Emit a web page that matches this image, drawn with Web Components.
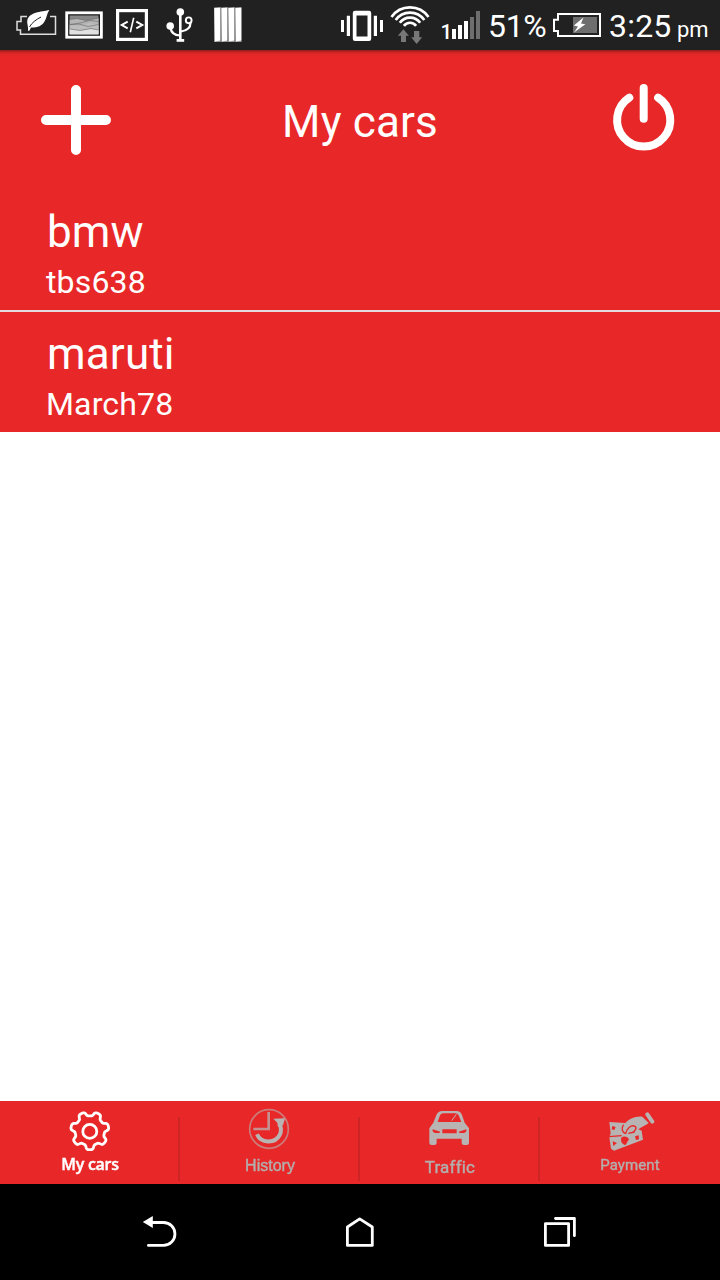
<!DOCTYPE html>
<html lang="en">
<head>
<meta charset="utf-8">
<title>My cars</title>
<style>
  body {
    margin: 0;
    background: #fff;
    font-family: Roboto, sans-serif;
    color: #fff;
  }
</style>
</head>
<body>
<phone-screen>
  <status-bar slot="status" battery="51%" time="3:25" period="pm"></status-bar>
  <app-header slot="header">My cars</app-header>
  <car-item name="bmw" plate="tbs638"></car-item>
  <car-item name="maruti" plate="March78"></car-item>
  <tab-bar slot="tabs"></tab-bar>
  <nav-bar slot="nav"></nav-bar>
</phone-screen>

<script>
// attach an open shadow root holding a copy of the given markup
function render(host, html) {
  const template = document.createElement('template');
  template.innerHTML = html;
  host.attachShadow({ mode: 'open' });
  host.shadowRoot.appendChild(template.content.cloneNode(true));
}

class PhoneScreen extends HTMLElement {
  constructor() {
    super();
    render(this, `
      <style>
        :host {
          display: flex;
          flex-direction: column;
          width: 720px;
          height: 1280px;
          overflow: hidden;
        }
        main {
          flex: 1;
        }
      </style>
      <slot name="status"></slot>
      <slot name="header"></slot>
      <main><slot></slot></main>
      <slot name="tabs"></slot>
      <slot name="nav"></slot>`);
  }
}

class StatusBar extends HTMLElement {
  constructor() {
    super();
    render(this, `
      <style>
        :host {
          display: flex;
          justify-content: space-between;
          height: 50px;
          background: #212121;
        }
        .group {
          display: flex;
        }
        .left {
          padding-left: 10px;
        }
        .right {
          padding-right: 12px;
        }
        svg {
          display: block;
          height: 50px;
          flex: none;
        }
        span {
          line-height: 52px;
          font-size: 32px;
          white-space: nowrap;
        }
        .battery {
          width: 64px;
          letter-spacing: -.3px;
        }
        .time {
          width: 68px;
          letter-spacing: .2px;
        }
        .period {
          width: 31px;
          font-size: 22px;
          line-height: 59px;
          height: 50px;
        }
      </style>
      <div class="group left">
        <svg width="50" viewBox="10 0 50 50" fill="none">
          <path d="M27 16.5H21V21.5H17V30H20.5V34.3H55.5V16.5H50" stroke="#ddd" stroke-width="1.5"/>
          <path d="M49.3 10C41 12 29 12 27.3 20.5C26.8 24 28.6 26 28 31L29.5 30.5L31 27.6C37 27.8 42 26 44.5 21.5C46.8 17.8 46.8 13.5 49.3 10Z" fill="#fff"/>
          <path d="M29.5 27C31.5 23 36 19.5 41 17" stroke="#212121" stroke-width="1"/>
        </svg>
        <svg width="49" viewBox="60 0 49 50" fill="none">
          <rect x="66.7" y="12.8" width="34.7" height="24.4" stroke="#fff" stroke-width="2.8"/>
          <rect x="69.7" y="15.5" width="28.8" height="18.8" fill="#888"/>
          <path d="M69.7 19.5L77 18.5L86 20.5L98.5 18V34.3H69.7Z" fill="#b5b5b5"/>
          <path d="M69.7 24.5L80 26L90 23L98.5 25V34.3H69.7Z" fill="#bdbdbd"/>
          <path d="M69.7 29L80 30.5L91 29L98.5 30V34.3H69.7Z" fill="#e2e2e2"/>
          <path d="M69.7 19.5L77 18.5L86 20.5L98.5 18M69.7 24.5L80 23L90 20.5L98.5 21.5M69.7 24.8L79 24L88 26.5L98.5 24.5M69.7 29L80 30.5L91 28.5L98.5 30" stroke="#666" stroke-width=".6"/>
        </svg>
        <svg width="48" viewBox="109 0 48 50" fill="none" stroke="#fff">
          <rect x="117.6" y="10.6" width="28.8" height="28.8" stroke-width="3.2"/>
          <path d="M127.7 21.7L121.8 25L127.7 28.3M136.3 21.7L142.2 25L136.3 28.3" stroke-width="2"/>
          <path d="M133.7 17.8L130.3 32.3" stroke-width="1.6"/>
        </svg>
        <svg width="47" viewBox="157 0 47 50" fill="none" stroke="#fff" stroke-width="2.2">
          <circle cx="180.3" cy="12" r="3.8" fill="#fff" stroke="none"/>
          <circle cx="170.2" cy="26" r="3.8" fill="#fff" stroke="none"/>
          <circle cx="188.7" cy="20.3" r="2.9" stroke-width="1.9"/>
          <path d="M180.3 12V40" stroke-width="2.6"/>
          <path d="M176.6 40.4H184.2" stroke-width="2.8"/>
          <path d="M170.5 28Q171.5 35 180 35.5M190.5 23Q190.5 30 181 31.5"/>
        </svg>
        <svg width="46" viewBox="204 0 46 50">
          <path d="M214 7.5H241.5V42H214Z" fill="#999"/>
          <path d="M214.3 8L220.4 7.4V40.5L215 41.5ZM221.2 8L227.4 7.4V40.5L222 41.5ZM228.2 8L234.4 7.4V40.5L229 41.5ZM235.2 8L241.3 7.4V40.5L236 41.5Z" fill="#fff"/>
          <path d="M220.8 8V42M227.8 8V42M234.8 8V42" stroke="#777" stroke-width=".8"/>
        </svg>
      </div>
      <div class="group right">
        <svg width="50" viewBox="337 0 50 50" fill="#fff">
          <path fill-rule="evenodd" d="M355 10.8H369Q371.2 10.8 371.2 13V38.8Q371.2 41 369 41H355Q352.8 41 352.8 38.8V13Q352.8 10.8 355 10.8ZM356.5 15.5V36.5H367.5V15.5Z"/>
          <path d="M341 20H344V32H341ZM346.8 15.7H350V36H346.8ZM373.8 15.7H377V36H373.8ZM380 20H383V32H380Z"/>
        </svg>
        <svg width="48" viewBox="387 0 48 50" fill="none">
          <g stroke="#fff" stroke-width="2.7">
            <path d="M391.5 17A22.6 22.6 0 0 1 428.5 17"/>
            <path d="M395.7 20A17.5 17.5 0 0 1 424.3 20"/>
            <path d="M399.8 22.8A12.5 12.5 0 0 1 420.2 22.8"/>
            <path d="M403.9 25.9A7.5 7.5 0 0 1 416.1 25.9"/>
          </g>
          <path d="M403.4 29.3L409 35.7H406V42H401V35.7H397.8ZM414 31H419.3V37.3H422.2L416.6 44L411.2 37.3H414Z" fill="#777"/>
        </svg>
        <svg width="53" viewBox="435 0 53 50" fill="#fff">
          <text x="440.4" y="39" font-size="20.5" font-weight="500">1</text>
          <path d="M452 29H456V39H452ZM458 25H462V39H458ZM464 21H468V39H464Z"/>
          <path d="M470 17H474V39H470ZM476 11H480V39H476Z" fill="#6e6e6e"/>
        </svg>
        <span class="battery"></span>
        <svg width="57" viewBox="552 0 57 50">
          <path d="M558 14H600V36H558V31H554V19.7H558Z" fill="none" stroke="#fff" stroke-width="2"/>
          <path d="M573 17H597V33H573Z" fill="#6e6e6e"/>
          <path d="M583.5 17.5L573.8 25.6L578 26.4L574 32.4L585.4 24.2L581 23.6Z" fill="#fff"/>
        </svg>
        <span class="time"></span>
        <span class="period"></span>
      </div>`);
  }

  connectedCallback() {
    ['battery', 'time', 'period'].forEach((key) => {
      this.shadowRoot.querySelector('.' + key).textContent = this.getAttribute(key);
    });
  }
}

class AppHeader extends HTMLElement {
  constructor() {
    super();
    render(this, `
      <style>
        :host {
          display: flex;
          align-items: center;
          justify-content: space-between;
          box-sizing: border-box;
          height: 140px;
          padding: 0 36px;
          background: linear-gradient(#8c1c1c, #c82323 2px, #e02727 4px, #e82828 7px);
        }
        svg {
          display: block;
          width: 80px;
          height: 80px;
          fill: none;
          stroke: #fff;
          stroke-linecap: round;
        }
        h1 {
          margin: 0;
          padding-top: 4px;
          font-size: 44px;
          font-weight: 400;
          letter-spacing: .15px;
          line-height: 52px;
        }
      </style>
      <svg viewBox="36 80 80 80" stroke-width="10"><path d="M46 120H106M76 90V150"/></svg>
      <h1><slot></slot></h1>
      <svg viewBox="604 80 80 80" stroke-width="8">
        <path d="M643.7 88V118.7M629.3 97.6A26.6 26.6 0 1 0 658.1 97.6"/>
      </svg>`);
  }
}

class CarItem extends HTMLElement {
  constructor() {
    super();
    render(this, `
      <style>
        :host {
          display: block;
          padding: 16px 46px 4px;
          background: #e82828;
        }
        :host(:not(:last-of-type)) {
          border-bottom: 2px solid #e4dcdc;
        }
        .name {
          padding-left: 1px;
          font-size: 44px;
          letter-spacing: .15px;
          line-height: 52px;
        }
        .plate {
          font-size: 32px;
          letter-spacing: .15px;
          line-height: 48px;
        }
      </style>
      <div class="name"></div>
      <div class="plate"></div>`);
  }

  connectedCallback() {
    this.shadowRoot.querySelector('.name').textContent = this.getAttribute('name');
    this.shadowRoot.querySelector('.plate').textContent = this.getAttribute('plate');
  }
}

class TabItem extends HTMLElement {
  constructor() {
    super();
    render(this, `
      <style>
        :host {
          display: block;
          flex: 1;
          color: #b4aead;
          text-align: center;
        }
        :host([active]) {
          color: #fff;
        }
        .content {
          filter: blur(.5px);
        }
        .label {
          margin-top: var(--label-top, 4px);
          font-family: var(--label-font, "Liberation Sans", sans-serif);
          font-size: var(--label-size, 15px);
          font-weight: var(--label-weight, 400);
          letter-spacing: var(--label-spacing, 0);
          line-height: 20px;
          -webkit-text-stroke: .4px;
        }
      </style>
      <div class="content">
        <slot name="icon"></slot>
        <div class="label"><slot></slot></div>
      </div>`);
  }
}

// closed outline of the settings gear, seven teeth with one pointing down
function gearPath(cx, cy) {
  const points = [];
  for (let deg = 0; deg < 360; deg += 3) {
    const a = deg * Math.PI / 180;
    const r = 16.9 + 2.2 * Math.tanh(2.2 * Math.cos(7 * (a - Math.PI / 2)));
    points.push((cx + r * Math.cos(a)).toFixed(2) + ' ' + (cy + r * Math.sin(a)).toFixed(2));
  }
  return 'M' + points.join('L') + 'Z';
}

class TabBar extends HTMLElement {
  constructor() {
    super();
    render(this, `
      <style>
        :host {
          display: flex;
          height: 83px;
          background: #e82828;
        }
        svg {
          display: block;
          width: 80px;
          height: 50px;
          margin: 0 auto;
        }
        i {
          width: 2px;
          height: 64px;
          margin: 16px 0 0 -2px;
          background: #cf2424;
        }
        .cars {
          --label-font: "Open Sans", sans-serif;
          --label-size: 16px;
          --label-top: 3px;
          --label-weight: 600;
          --label-spacing: -.3px;
        }
        .history {
          --label-size: 16px;
          --label-top: 5px;
        }
        .traffic {
          --label-font: Roboto, sans-serif;
          --label-size: 17px;
          --label-top: 6px;
          --label-spacing: .2px;
        }
        .payment {
          --label-font: Roboto, sans-serif;
          --label-size: 15px;
          --label-spacing: .1px;
        }
      </style>
      <tab-item class="cars" active>
        <svg slot="icon" viewBox="50 1101 80 50" fill="none" stroke="#fff" stroke-width="2.8">
          <path d="${gearPath(89.8, 1130.7)}"/>
          <circle cx="89.8" cy="1131.4" r="7"/>
        </svg>
        My cars
      </tab-item>
      <i></i>
      <tab-item class="history">
        <svg slot="icon" viewBox="0 0 240 150" fill="none">
          <g transform="translate(-690 -33)" stroke="#b8b4b3">
            <circle cx="807" cy="117" r="58" stroke-width="5" opacity=".6"/>
            <path d="M760 117H809M806 66V121" stroke-width="8" opacity=".75"/>
            <path d="M771 133C782 160 825 162 839 135C845 123 844 112 838 102" stroke-width="12"/>
            <path d="M820 86L855 85L849 106L834 110L832 98Z" fill="#b8b4b3" stroke="none"/>
          </g>
        </svg>
        History
      </tab-item>
      <i></i>
      <tab-item class="traffic">
        <svg slot="icon" viewBox="0 0 240 150">
          <g transform="translate(-150 -33)" fill="#b8b4b3">
            <path fill-rule="evenodd" d="M220 98L228 78Q233 63 247 63H289Q303 63 307 78L314 98L327 115V159Q327 165 320 165H312Q305 165 305 159V146H230V159Q230 165 223 165H215Q208 165 208 159V115ZM233 96H304L296 76Q293 70 286 70H250Q243 70 240 76ZM218 118Q216 128 226 129H238L241 125ZM319 118Q321 128 311 129H299L296 125ZM247 118V130H290V118Z"/>
            <path d="M275 92L289 73" fill="none" stroke="#b8b4b3" stroke-width="3"/>
          </g>
        </svg>
        Traffic
      </tab-item>
      <i></i>
      <tab-item class="payment">
        <svg slot="icon" viewBox="0 0 240 150" fill="none">
          <g transform="translate(-690 -33)">
            <path d="M748 96L795 99L845 122L849 149L762 182L753 176L748 142L752 130Z" fill="#b8b4b3"/>
            <path d="M794 101C806 88 824 78 847 80L866 99C852 110 840 111 829 124L815 129Z" fill="#b8b4b3"/>
            <path d="M862 73L877 95" stroke="#b8b4b3" stroke-width="12" stroke-linecap="round"/>
            <path d="M747 140L785 137M791 104C781 116 788 127 797 131M797 132C799 116 813 103 825 109C832 113 825 123 817 128M805 130L824 126" stroke="#e82828" stroke-width="4"/>
            <path d="M784 143C792 136 804 140 807 149C801 153 801 161 796 165C786 162 781 154 784 143Z" fill="#e82828"/>
            <path d="M757 108L767 111L763 120L755 118ZM758 154L771 159L760 168ZM825 139L836 136L837 148L828 150Z" fill="#e82828"/>
          </g>
        </svg>
        Payment
      </tab-item>`);
  }
}

class NavBar extends HTMLElement {
  constructor() {
    super();
    render(this, `
      <style>
        :host {
          display: flex;
          justify-content: center;
          height: 96px;
          background: #000;
        }
        svg {
          display: block;
          width: 200px;
          height: 96px;
          fill: none;
          stroke: #fff;
          stroke-width: 2.8;
          stroke-linejoin: round;
          stroke-linecap: round;
        }
      </style>
      <svg viewBox="60 1184 200 96">
        <path d="M152 1222.5H163.5A11.4 11.4 0 0 1 163.5 1245.4H148.4"/>
        <path d="M142.8 1222L152.8 1216V1228Z" fill="#fff" stroke="none"/>
      </svg>
      <svg viewBox="260 1184 200 96">
        <path d="M347.4 1227L359.7 1218.8L372.3 1227V1245.4H347.4Z"/>
      </svg>
      <svg viewBox="460 1184 200 96">
        <path d="M545.4 1223.6H568.6V1245.4H545.4ZM555.5 1218.5H574.4V1235.7"/>
      </svg>`);
  }
}

customElements.define('phone-screen', PhoneScreen);
customElements.define('status-bar', StatusBar);
customElements.define('app-header', AppHeader);
customElements.define('car-item', CarItem);
customElements.define('tab-item', TabItem);
customElements.define('tab-bar', TabBar);
customElements.define('nav-bar', NavBar);
</script>
</body>
</html>
